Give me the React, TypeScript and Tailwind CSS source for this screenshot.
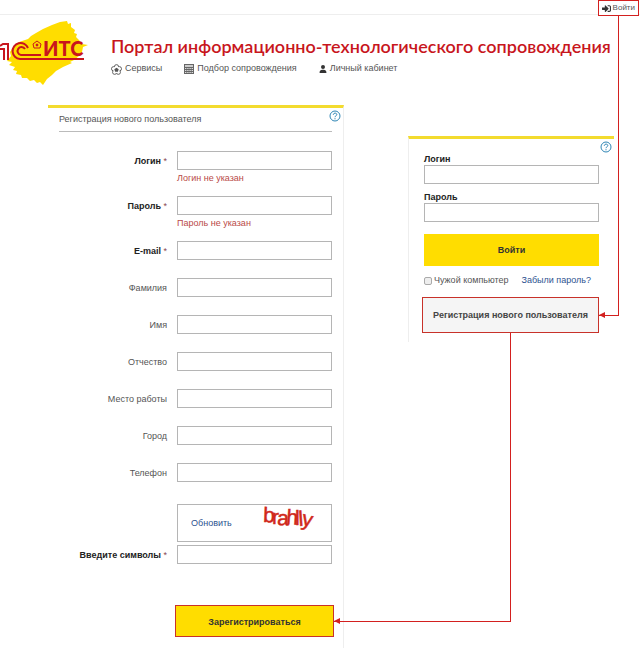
import type { ReactNode } from 'react';
import { FaUser } from 'react-icons/fa6';
import { FaSignInAlt } from 'react-icons/fa';

type Field = {
  id: string;
  label: string;
  type?: string;
  required?: boolean;
  error?: string;
};

const fields: Field[] = [
  { id: 'login', label: 'Логин', required: true, error: 'Логин не указан' },
  { id: 'password', label: 'Пароль', type: 'password', required: true, error: 'Пароль не указан' },
  { id: 'email', label: 'E-mail', type: 'email', required: true },
  { id: 'surname', label: 'Фамилия' },
  { id: 'name', label: 'Имя' },
  { id: 'patronymic', label: 'Отчество' },
  { id: 'company', label: 'Место работы' },
  { id: 'city', label: 'Город' },
  { id: 'phone', label: 'Телефон', type: 'tel' }
];

const captcha = [
  { char: 'b', x: 5, y: 17, angle: 2 },
  { char: 'r', x: 14, y: 19, angle: 0 },
  { char: 'a', x: 19, y: 20, angle: 2 },
  { char: 'h', x: 28, y: 19, angle: 4 },
  { char: 'l', x: 37, y: 20, angle: 0 },
  { char: 'l', x: 41, y: 21, angle: -4 },
  { char: 'y', x: 43, y: 20, angle: 12 }
];

const inputClass = 'block h-[19px] w-full border border-[#b5b5b5] bg-white px-1 text-[9px] outline-none';

function Logo() {
  return (
    <svg viewBox="0 0 94 72" className="h-[72px] w-[94px] shrink-0" role="img" aria-label="1С ИТС">
      <path
        d="M28 21 L31 18 L36 15 L43 11 L52 7 L60 4 L67 3 L68 6 L71 5 L71 9 L75 12 L74 15 L77 16 L76 19 L79 22 L82 26 L88 27 L83 29 L82 34 L79 38 L74 42 L70 44 L72 45 L63 49 L56 53 L52 57 L47 61 L43 67 L40 64 L37 65 L34 62 L30 63 L27 60 L22 60 L21 57 L16 56 L17 53 L13 52 L15 49 L9 47 L12 44 L7 43 L11 38 L10 34 L14 28 L19 24 Z"
        fill="#ffdd00"
      />
      <g fill="none" stroke="#c8161d" strokeWidth="2">
        <path d="M0 28 L3 26 H8 V42 M0 31 H4 V42" />
        <path d="M28 30 A8 8 0 1 0 20 41 H84" />
        <path d="M25 31 A4 4 0 1 0 21 37 H41" />
      </g>
      <g fill="none" stroke="#c8161d" strokeWidth="1">
        <path d="M37 23 L41 26 L40 30 H34 L33 26 Z" />
        <circle cx="37" cy="27" r="1" fill="#c8161d" />
      </g>
      <text x="43" y="38" fill="#c8161d" fontFamily="Lato, sans-serif" fontWeight="900" fontSize="20">
        ИТС
      </text>
    </svg>
  );
}

function ServicesIcon() {
  return (
    <svg viewBox="0 0 12 12" className="size-[11px]" fill="none" stroke="currentColor">
      <circle cx="6" cy="3" r="2.3" />
      <circle cx="9.2" cy="5.2" r="2.3" />
      <circle cx="8" cy="9" r="2.3" />
      <circle cx="4" cy="9" r="2.3" />
      <circle cx="2.8" cy="5.2" r="2.3" />
      <circle cx="6" cy="6.4" r="3.6" fill="#fff" stroke="none" />
      <path d="M6 4 L8.4 5.8 L7.5 8.5 H4.5 L3.6 5.8 Z" fill="currentColor" stroke="none" />
    </svg>
  );
}

function CalculatorIcon() {
  return (
    <svg viewBox="0 0 10 10" className="size-[10px]">
      <path d="M0 0 H10 V10 H0 Z" fill="#666" />
      <path d="M1 1 H9 V3 H1 Z" fill="#ccc" />
      <path d="M1 4.5 H9 M1 6.5 H9 M1 8.5 H9" stroke="#ddd" strokeDasharray="1.4 .8" />
    </svg>
  );
}

function HelpButton() {
  return (
    <button type="button" aria-label="Помощь" className="absolute top-[2px] right-[2px] text-[#2f86b5]">
      <svg viewBox="0 0 12 12" className="size-3" fill="none" stroke="currentColor">
        <circle cx="6" cy="6" r="5" />
        <path d="M4.3 4.8 C4.3 2.6 7.8 2.6 7.8 4.6 C7.8 5.8 6 5.8 6 7.2 M6 8.2 V9.3" />
      </svg>
    </button>
  );
}

function NavLink({ icon, children }: { icon: ReactNode; children: ReactNode }) {
  return (
    <a href="#" className="flex items-center gap-[3px]">
      {icon}
      {children}
    </a>
  );
}

function FormRow({ field }: { field: Field }) {
  return (
    <div className={`grid grid-cols-[108fr_155fr] gap-x-[10px] ${field.error ? 'mb-2' : 'mb-[18px]'}`}>
      <label
        htmlFor={field.id}
        className={`pt-px text-right leading-[18px] ${field.required ? 'font-bold text-[#222]' : ''}`}
      >
        {field.label}
        {field.required && <span className="font-normal text-[#8a4550]"> *</span>}
      </label>
      <div>
        <input id={field.id} type={field.type ?? 'text'} className={inputClass} />
        {field.error && <p className="h-[18px] leading-4 text-[#b94a48]">{field.error}</p>}
      </div>
    </div>
  );
}

function RegisterPanel() {
  return (
    <form className="relative border-t-3 border-r border-t-[#f3db2e] border-r-[#eee] px-[11px] pb-[11px]">
      <HelpButton />
      <h2 className="mb-[19px] border-b border-[#bbb] pt-[3px] pb-1 leading-4">Регистрация нового пользователя</h2>

      {fields.map((field) => (
        <FormRow key={field.id} field={field} />
      ))}

      <div className="mt-[22px] grid grid-cols-[108fr_155fr] gap-x-[10px] gap-y-[3px]">
        <div className="col-start-2 flex h-[38px] items-center justify-between border border-[#b5b5b5] px-[13px]">
          <button type="button" className="pt-[2px] text-[#2d5290]">
            Обновить
          </button>
          <svg viewBox="0 0 60 36" className="h-9 w-[60px] overflow-visible" role="img" aria-label="Символы с картинки">
            {captcha.map((c, i) => (
              <text
                key={i}
                x={c.x}
                y={c.y}
                transform={`rotate(${c.angle} ${c.x} ${c.y})`}
                fontFamily="Liberation Sans, sans-serif"
                fontSize="21"
                fill="#d0281a"
                stroke="#d0281a"
                strokeWidth=".5"
              >
                {c.char}
              </text>
            ))}
          </svg>
        </div>
        <label htmlFor="symbols" className="pt-px text-right leading-[18px] font-bold whitespace-nowrap text-[#222]">
          Введите символы<span className="font-normal text-[#8a4550]"> *</span>
        </label>
        <input id="symbols" type="text" className={inputClass} />
      </div>

      <div className="-mr-[2px] mt-[41px] grid grid-cols-[106fr_159fr] gap-x-[10px]">
        <button
          type="submit"
          className="col-start-2 h-8 border border-[#c8322a] bg-[#ffdd00] pt-[3px] font-bold text-[#333]"
        >
          Зарегистрироваться
        </button>
      </div>
    </form>
  );
}

function LoginPanel() {
  return (
    <form className="relative mt-[31px] border-t-3 border-l border-t-[#f3db2e] border-l-[#eee] px-[15px] pt-[14px] pb-[9px]">
      <HelpButton />
      <label htmlFor="auth-login" className="block leading-3 font-bold text-[#222]">
        Логин
      </label>
      <input id="auth-login" type="text" className={inputClass} />
      <label htmlFor="auth-password" className="mt-[7px] block leading-3 font-bold text-[#222]">
        Пароль
      </label>
      <input id="auth-password" type="password" className={inputClass} />

      <button type="submit" className="mt-3 block h-8 w-full bg-[#ffdd00] pt-px font-bold text-[#333]">
        Войти
      </button>

      <div className="mt-[7px] flex h-4 items-center justify-between pr-2 whitespace-nowrap">
        <label className="flex items-center gap-[2px]">
          <input
            type="checkbox"
            className="size-2 appearance-none rounded-xs border border-[#aaa] bg-[#eee] checked:bg-[#2d5290]"
          />
          Чужой компьютер
        </label>
        <a href="#" className="text-[#2d5290]">
          Забыли пароль?
        </a>
      </div>

      <div className="relative mt-2 -ml-[2px]">
        <a
          href="#"
          className="flex h-9 items-center justify-center border border-[#c8322a] bg-[#f5f5f5] pt-px font-bold whitespace-nowrap text-[#444]"
        >
          Регистрация нового пользователя
        </a>

        {/* from the header link down to this one */}
        <div className="absolute bottom-[17px] left-full h-[300px] w-5 border-r border-b border-[#d3201f]">
          <svg viewBox="0 0 6 6" className="absolute -bottom-[3px] left-0 size-[6px]">
            <path d="M0 3 L6 0 V6 Z" fill="#d3201f" />
          </svg>
        </div>

        {/* from this link down to the submit button */}
        <div className="absolute top-full right-1/2 h-[289px] w-[177px] border-r border-b border-[#d3201f]">
          <svg viewBox="0 0 6 6" className="absolute -bottom-[3px] left-0 size-[6px]">
            <path d="M0 3 L6 0 V6 Z" fill="#d3201f" />
          </svg>
        </div>
      </div>
    </form>
  );
}

export default function App() {
  return (
    <div className="bg-white font-['Liberation_Sans',sans-serif] text-[9px] text-[#555]">
      <div className="flex h-[15px] justify-end border-b border-[#eee] pr-px">
        <a href="#" className="flex h-4 items-center gap-[2px] border border-[#d3201f] bg-white px-[3px] text-[8px]">
          <FaSignInAlt className="size-[9px] text-[#333]" />
          Войти
        </a>
      </div>

      <header className="flex pt-[3px]">
        <Logo />
        <div className="pt-[17px] pl-[17px]">
          <h1 className="font-['Lato','Open_Sans',sans-serif] text-[18px] leading-[22px] font-semibold whitespace-nowrap text-[#c8161d]">
            Портал информационно-технологического сопровождения
          </h1>
          <nav className="mt-1 flex h-4 items-center gap-[22px]">
            <NavLink icon={<ServicesIcon />}>Сервисы</NavLink>
            <NavLink icon={<CalculatorIcon />}>Подбор сопровождения</NavLink>
            <NavLink icon={<FaUser className="size-2 text-[#333]" />}>Личный кабинет</NavLink>
          </nav>
        </div>
      </header>

      <main className="mt-[15px] grid grid-cols-[296fr_206fr] items-start gap-16 pr-[26px] pl-12">
        <RegisterPanel />
        <LoginPanel />
      </main>
    </div>
  );
}
